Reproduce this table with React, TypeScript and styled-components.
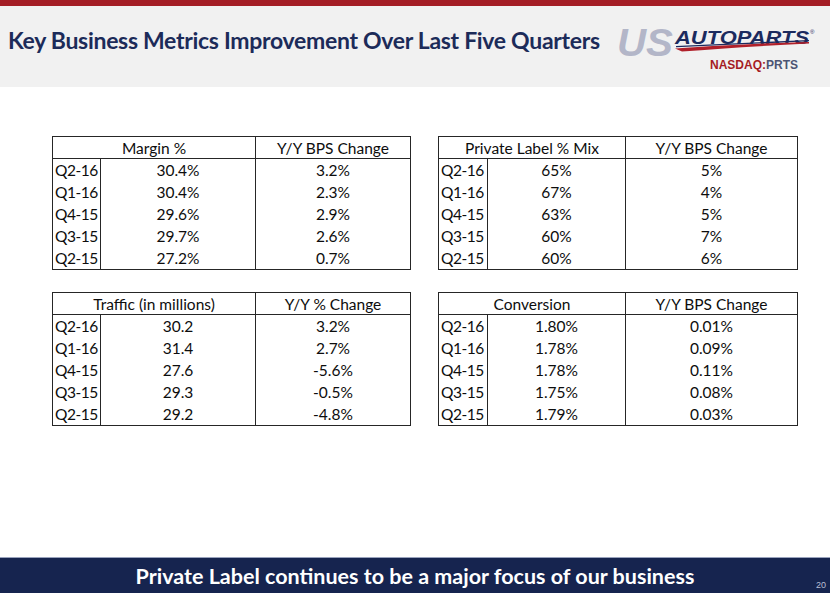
import React, { FC } from 'react';
import styled, { createGlobalStyle } from 'styled-components';

const GlobalStyle = createGlobalStyle`
  html, body {
    margin: 0;
    padding: 0;
    background: #ffffff;
  }
  body {
    font-family: Lato, "Open Sans", sans-serif;
  }
`;

type Row = [string, string, string];

interface MetricTableProps {
  title: string;
  change: string;
  cols: [number, number, number];
  rows: Row[];
}

const MetricTable: FC<MetricTableProps> = ({ title, change, cols, rows }) => (
  <Table style={{ width: cols[0] + cols[1] + cols[2] }}>
    <colgroup>
      {cols.map((w, i) => (
        <col key={i} style={{ width: w }} />
      ))}
    </colgroup>
    <thead>
      <tr>
        <HeadCell colSpan={2}>{title}</HeadCell>
        <HeadCell>{change}</HeadCell>
      </tr>
    </thead>
    <tbody>
      {rows.map((r) => (
        <tr key={r[0]}>
          <QuarterCell>{r[0]}</QuarterCell>
          <ValueCell $divider>{r[1]}</ValueCell>
          <ValueCell>{r[2]}</ValueCell>
        </tr>
      ))}
    </tbody>
  </Table>
);

const margin: Row[] = [
  ['Q2-16', '30.4%', '3.2%'],
  ['Q1-16', '30.4%', '2.3%'],
  ['Q4-15', '29.6%', '2.9%'],
  ['Q3-15', '29.7%', '2.6%'],
  ['Q2-15', '27.2%', '0.7%'],
];

const privateLabel: Row[] = [
  ['Q2-16', '65%', '5%'],
  ['Q1-16', '67%', '4%'],
  ['Q4-15', '63%', '5%'],
  ['Q3-15', '60%', '7%'],
  ['Q2-15', '60%', '6%'],
];

const traffic: Row[] = [
  ['Q2-16', '30.2', '3.2%'],
  ['Q1-16', '31.4', '2.7%'],
  ['Q4-15', '27.6', '-5.6%'],
  ['Q3-15', '29.3', '-0.5%'],
  ['Q2-15', '29.2', '-4.8%'],
];

const conversion: Row[] = [
  ['Q2-16', '1.80%', '0.01%'],
  ['Q1-16', '1.78%', '0.09%'],
  ['Q4-15', '1.78%', '0.11%'],
  ['Q3-15', '1.75%', '0.08%'],
  ['Q2-15', '1.79%', '0.03%'],
];

const Logo: FC = () => (
  <LogoSvg width={205} height={52} viewBox="0 0 205 52">
    <text
      x={5}
      y={34}
      fill="#b3b6c8"
      fontFamily="'Liberation Sans', Arial, sans-serif"
      fontStyle="italic"
      fontWeight={700}
      fontSize={39}
      textLength={56}
      lengthAdjust="spacingAndGlyphs"
    >
      US
    </text>
    <text
      x={63}
      y={22}
      fill="#1b2a5e"
      fontFamily="'Liberation Sans', Arial, sans-serif"
      fontStyle="italic"
      fontWeight={700}
      fontSize={19}
      textLength={134}
      lengthAdjust="spacingAndGlyphs"
    >
      AUTOPARTS
    </text>
    <text x={198} y={12} fill="#1b2a5e" fontFamily="'Liberation Sans', Arial, sans-serif" fontSize={6}>
      ®
    </text>
    <path d="M64 24 L197 18 L197 19.3 L64 25.3 Z" fill="#1b2a5e" />
    <path d="M63 26.5 Q130 21.5 197 20 L197 21.5 Q125 25 70 29.5 Z" fill="#b0202a" />
    <text
      x={98}
      y={47}
      fontFamily="'Liberation Sans', Arial, sans-serif"
      fontWeight={700}
      fontSize={12}
    >
      <tspan fill="#a51c24">NASDAQ:</tspan>
      <tspan fill="#4b5474">PRTS</tspan>
    </text>
  </LogoSvg>
);

export default function App() {
  return (
    <>
      <GlobalStyle />
      <Slide>
        <TopBar />
        <Header>
          <Title>Key Business Metrics Improvement Over Last Five Quarters</Title>
          <Logo />
        </Header>
        <Main>
          <MetricTable title="Margin %" change="Y/Y BPS Change" cols={[48, 155, 155]} rows={margin} />
          <MetricTable
            title="Private Label % Mix"
            change="Y/Y BPS Change"
            cols={[49, 138, 172]}
            rows={privateLabel}
          />
          <MetricTable
            title="Traffic (in millions)"
            change="Y/Y % Change"
            cols={[48, 155, 155]}
            rows={traffic}
          />
          <MetricTable title="Conversion" change="Y/Y BPS Change" cols={[49, 138, 172]} rows={conversion} />
        </Main>
        <Footer>
          <FooterText>Private Label continues to be a major focus of our business</FooterText>
          <PageNum>20</PageNum>
        </Footer>
      </Slide>
    </>
  );
}

const Slide = styled.div`
  width: 830px;
  height: 593px;
  display: flex;
  flex-direction: column;
  background: #ffffff;
  overflow: hidden;
`;

const TopBar = styled.div`
  flex-shrink: 0;
  height: 6px;
  background: #a41d25;
`;

const Header = styled.header`
  flex-shrink: 0;
  height: 81px;
  display: flex;
  align-items: flex-start;
  background: #f1f1f1;
`;

const Title = styled.h1`
  margin: 20px 0 0 8px;
  font-family: Lato, "Open Sans", sans-serif;
  font-weight: 700;
  font-size: 23px;
  line-height: 28px;
  letter-spacing: -0.3px;
  color: #1c2b59;
  white-space: nowrap;
`;

const LogoSvg = styled.svg`
  display: block;
  margin: 16px 13px 0 auto;
  flex-shrink: 0;
`;

const Main = styled.main`
  flex: 1;
  display: grid;
  grid-template-columns: 358px 359px;
  grid-auto-rows: min-content;
  align-items: start;
  column-gap: 28px;
  row-gap: 22px;
  padding: 49px 0 0 52px;
`;

const Table = styled.table`
  border-collapse: collapse;
  table-layout: fixed;
  border: 1px solid #262626;
  font-family: Lato, "Open Sans", sans-serif;
  font-size: 15.5px;
  line-height: 20px;
  color: #0d0d0d;
  white-space: nowrap;
`;

const HeadCell = styled.th`
  height: 21px;
  padding: 0;
  font-weight: 400;
  text-align: center;
  border-bottom: 1px solid #262626;
  & + & {
    border-left: 1px solid #262626;
  }
`;

const QuarterCell = styled.td`
  height: 22px;
  padding: 0 0 0 2px;
  text-align: left;
  letter-spacing: -0.5px;
  overflow: hidden;
  border-right: 1px solid #262626;
`;

const ValueCell = styled.td<{ $divider?: boolean }>`
  height: 22px;
  padding: 0;
  text-align: center;
  border-right: ${(p) => (p.$divider ? '1px solid #262626' : 'none')};
`;

const Footer = styled.footer`
  flex-shrink: 0;
  position: relative;
  height: 35px;
  border-top: 1px solid #9aa3bd;
  background: #16244f;
  display: flex;
  align-items: center;
  justify-content: center;
`;

const FooterText = styled.div`
  font-family: Lato, "Open Sans", sans-serif;
  font-weight: 700;
  font-size: 21.5px;
  color: #ffffff;
  white-space: nowrap;
`;

const PageNum = styled.span`
  position: absolute;
  right: 4px;
  bottom: 3px;
  font-family: "Liberation Sans", Arial, sans-serif;
  font-size: 9px;
  color: #b9bfd3;
`;
